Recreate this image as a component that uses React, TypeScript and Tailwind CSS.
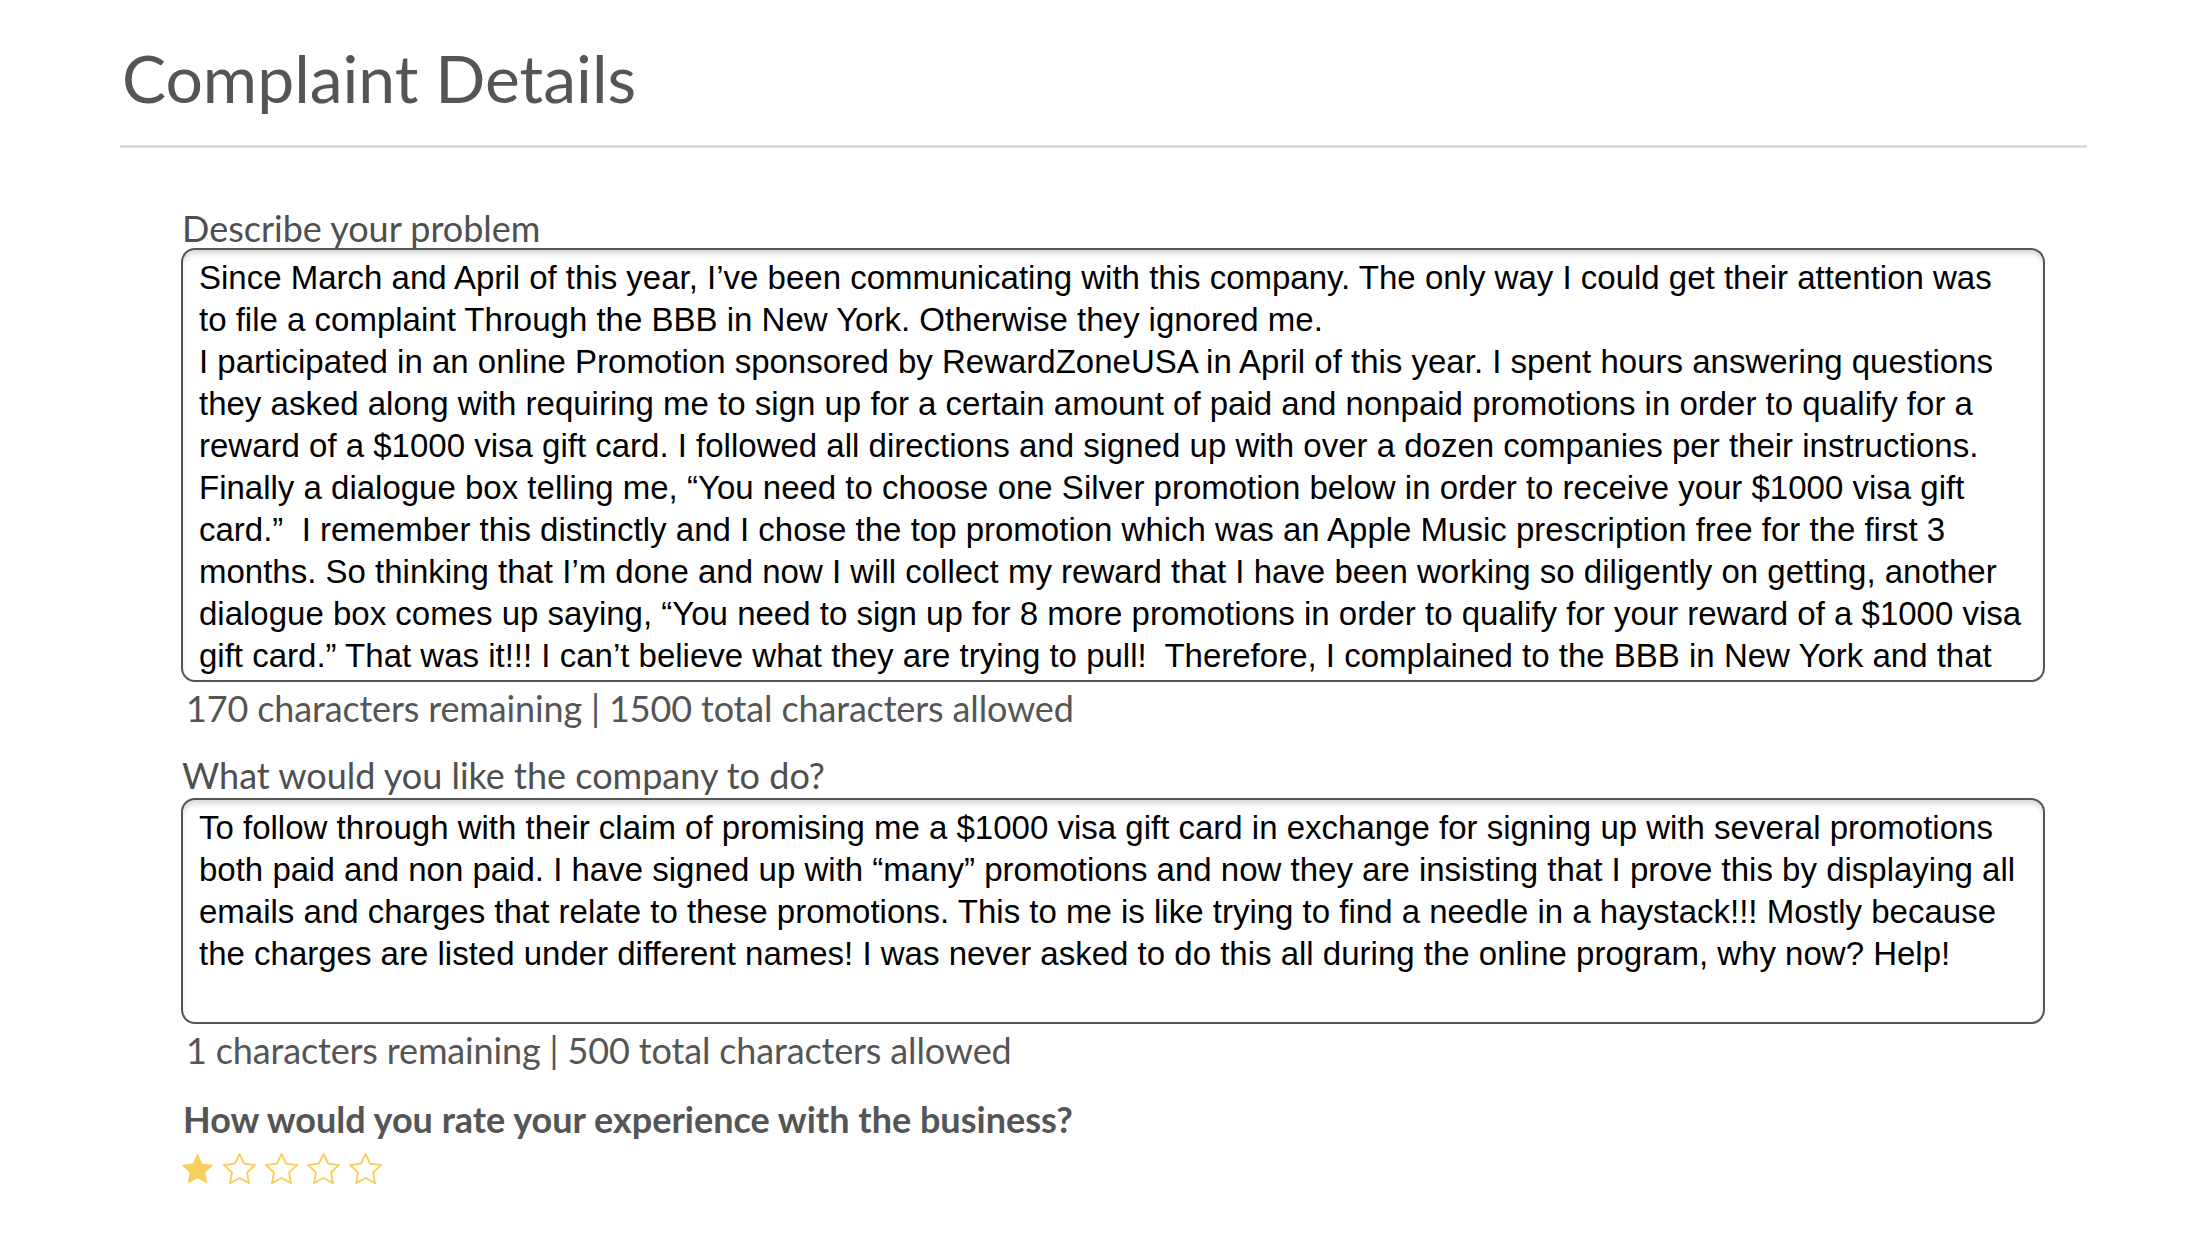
import type { ReactNode } from "react";

const PROBLEM_LINES = [
  "Since March and April of this year, I’ve been communicating with this company. The only way I could get their attention was",
  "to file a complaint Through the BBB in New York. Otherwise they ignored me.",
  "I participated in an online Promotion sponsored by RewardZoneUSA in April of this year. I spent hours answering questions",
  "they asked along with requiring me to sign up for a certain amount of paid and nonpaid promotions in order to qualify for a",
  "reward of a $1000 visa gift card. I followed all directions and signed up with over a dozen companies per their instructions.",
  "Finally a dialogue box telling me, “You need to choose one Silver promotion below in order to receive your $1000 visa gift",
  "card.”  I remember this distinctly and I chose the top promotion which was an Apple Music prescription free for the first 3",
  "months. So thinking that I’m done and now I will collect my reward that I have been working so diligently on getting, another",
  "dialogue box comes up saying, “You need to sign up for 8 more promotions in order to qualify for your reward of a $1000 visa",
  "gift card.” That was it!!! I can’t believe what they are trying to pull!  Therefore, I complained to the BBB in New York and that",
];

const REQUEST_LINES = [
  "To follow through with their claim of promising me a $1000 visa gift card in exchange for signing up with several promotions",
  "both paid and non paid. I have signed up with “many” promotions and now they are insisting that I prove this by displaying all",
  "emails and charges that relate to these promotions. This to me is like trying to find a needle in a haystack!!! Mostly because",
  "the charges are listed under different names! I was never asked to do this all during the online program, why now? Help!",
];

function Label({ children }: { children: ReactNode }) {
  return (
    <p className="pl-[1px] font-['Lato',sans-serif] text-[36px] leading-[40px] text-[#4f4f4f]">
      {children}
    </p>
  );
}

function Counter({ children }: { children: ReactNode }) {
  return (
    <p className="mt-[6px] pl-[5px] font-['Lato',sans-serif] text-[36px] leading-[40px] tracking-[-0.15px] text-[#555555]">
      {children}
    </p>
  );
}

// Reads like a filled-in textarea; lines are laid out as they wrapped in the form.
function TextBox({ lines, height }: { lines: string[]; height: string }) {
  return (
    <div
      className={`${height} w-[1864px] overflow-hidden rounded-[14px] border-[2.5px] border-[#555555] bg-white pl-[16px] pt-[7px] shadow-[inset_0_5px_6px_-2px_rgba(0,0,0,0.18)]`}
    >
      {lines.map((l, i) => (
        <div
          key={i}
          className="whitespace-pre font-['Liberation_Sans',Arial,sans-serif] text-[33px] leading-[42px] text-black"
        >
          {l}
        </div>
      ))}
    </div>
  );
}

function Star({ filled }: { filled: boolean }) {
  return (
    <svg viewBox="0.9 0.9 22.2 21.2" className="h-[31px] w-[33px]">
      <path
        d="M12 1.6L15.17 8.23 22.46 9.2 17.14 14.27 18.47 21.5 12 18 5.53 21.5 6.86 14.27 1.54 9.2 8.83 8.23Z"
        fill={filled ? "#f8cf5c" : "none"}
        stroke="#f8cf5c"
        strokeWidth={filled ? 0.4 : 1.3}
        strokeLinejoin="miter"
      />
    </svg>
  );
}

export default function App() {
  return (
    <div className="min-h-screen w-full bg-white pl-[120px] pt-[38px]">
      <div className="w-[1967px]">
        <h1 className="pl-[2px] font-['Lato',sans-serif] text-[66px] font-normal leading-[80px] text-[#555555]">
          Complaint Details
        </h1>
        <div className="mt-[27px] h-[3px] bg-[#dddddd]" />

        <div className="pl-[61px] pt-[60px]">
          <Label>Describe your problem</Label>
          <TextBox lines={PROBLEM_LINES} height="h-[434px]" />
          <Counter>170 characters remaining | 1500 total characters allowed</Counter>

          <div className="mt-[27px]">
            <Label>What would you like the company to do?</Label>
          </div>
          <div className="mt-[3px]">
            <TextBox lines={REQUEST_LINES} height="h-[226px]" />
          </div>
          <Counter>1 characters remaining | 500 total characters allowed</Counter>

          <p className="mt-[29px] pl-[2px] font-['Lato',sans-serif] text-[36px] font-bold leading-[40px] text-[#555555]">
            How would you rate your experience with the business?
          </p>
          <div className="mt-[14px] flex gap-[9px]">
            {[0, 1, 2, 3, 4].map((i) => (
              <Star key={i} filled={i === 0} />
            ))}
          </div>
        </div>
      </div>
    </div>
  );
}
